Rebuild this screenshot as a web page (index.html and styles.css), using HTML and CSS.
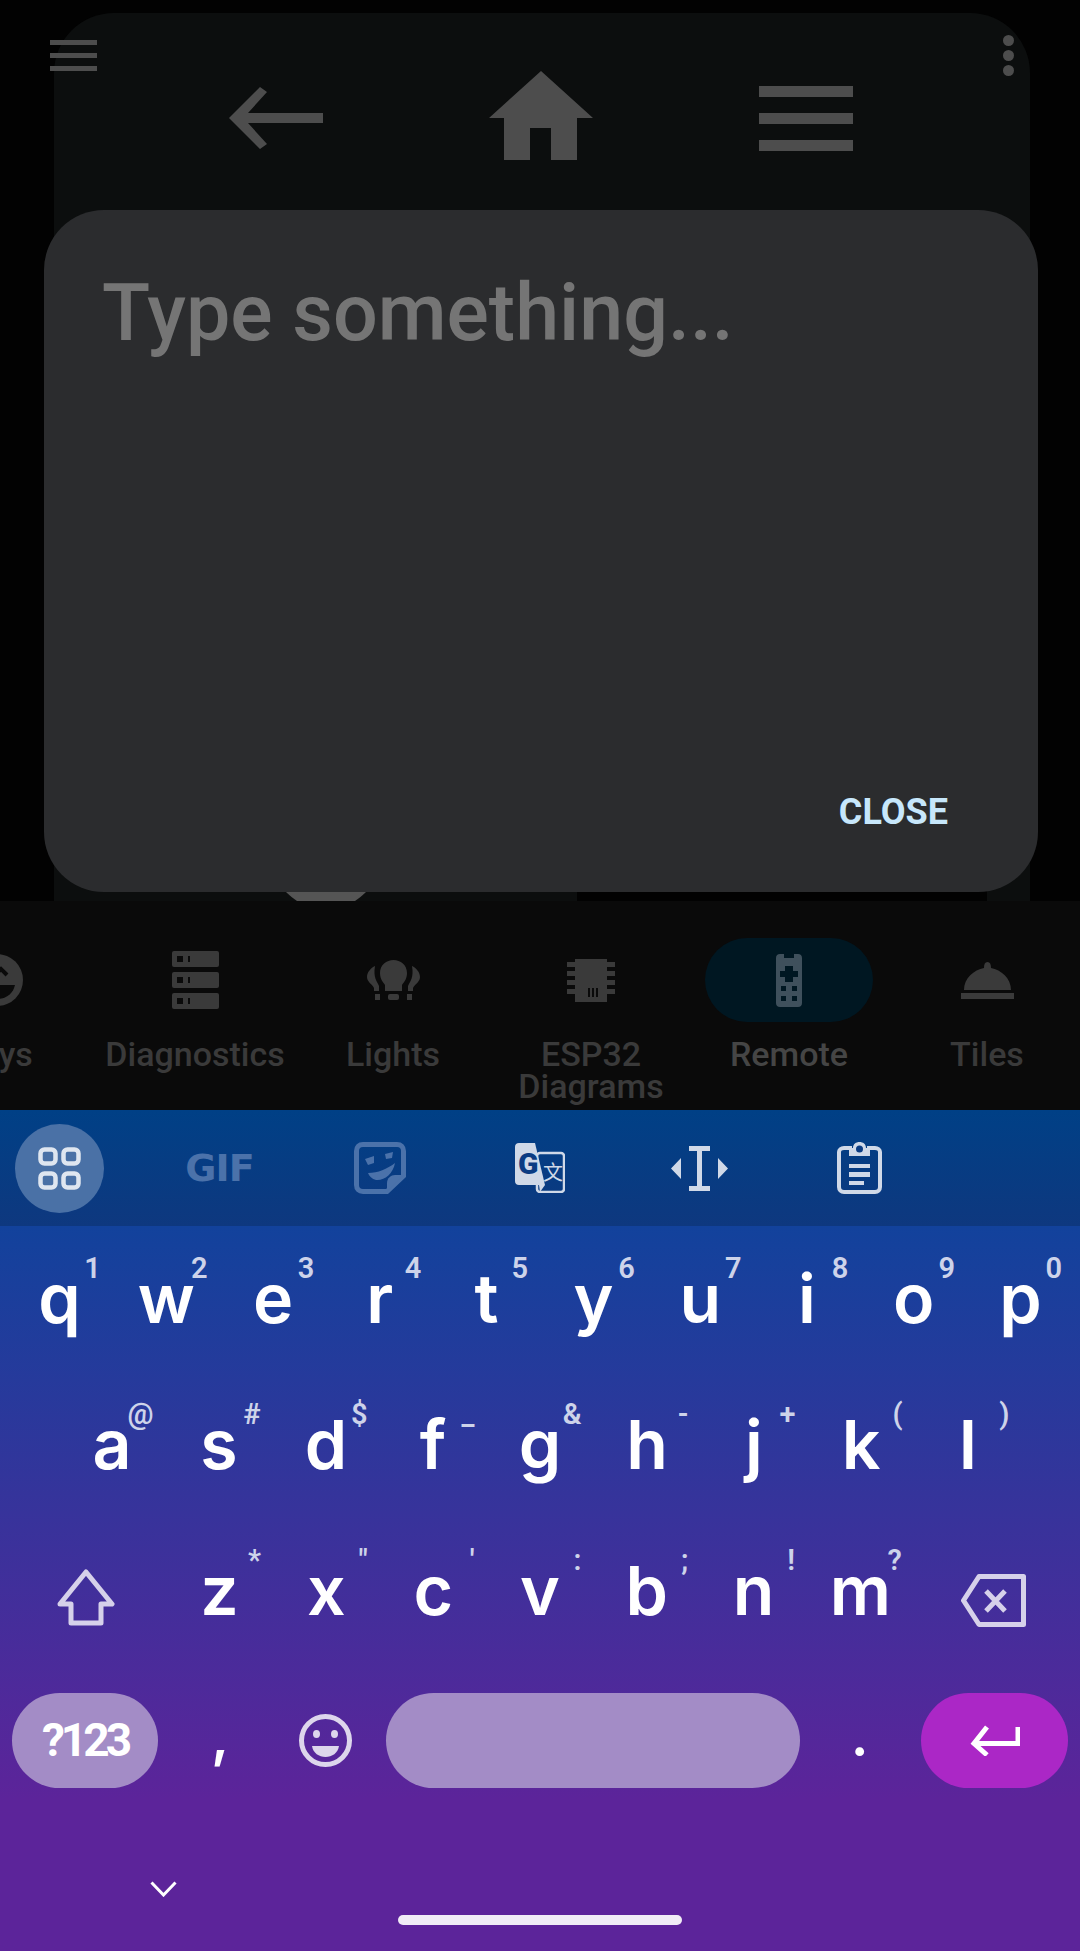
FILE: index.html
```html
<!DOCTYPE html>
<html>
<head>
    <title>Remote</title>
    <link rel="stylesheet" href="styles.css">
</head>
<body>

<div class="app">
    <div class="panel">
        <div class="panel-hole"></div>
    </div>

    <div class="topbar">
        <div class="bars bars-small"><i></i><i></i><i></i></div>
        <div class="dots"><i></i><i></i><i></i></div>
    </div>

    <div class="remote-row">
        <div class="remote-slot remote-slot-low">
            <svg width="94" height="62" viewBox="0 0 94 62"><polygon points="0,31 31,0 38,5 19,26 94,26 94,36 19,36 38,57 31,62" fill="#4d4d4d"/></svg>
        </div>
        <div class="remote-slot">
            <svg width="104" height="89" viewBox="0 0 104 89"><polygon points="52,0 104,47 88,47 88,89 62,89 62,57 41,57 41,89 15,89 15,47 0,47" fill="#4d4d4d"/></svg>
        </div>
        <div class="remote-slot remote-slot-low">
            <div class="bars bars-large"><i></i><i></i><i></i></div>
        </div>
    </div>

    <svg class="knob" width="80" height="9" viewBox="0 0 80 9"><path d="M0 0H80C76 4 72 7 69 9H11C8 7 4 4 0 0Z" fill="#555"/></svg>

    <div class="dialog">
        <div class="dialog-input">Type something...</div>
        <div class="dialog-close">CLOSE</div>
    </div>
</div>

<div class="nav">
    <div class="nav-item">
        <div class="nav-icon">
            <svg width="52" height="52" viewBox="0 0 52 52"><circle cx="26" cy="26" r="26" fill="#3a3a3a"/><path d="M24 21L30 15L36 21" fill="none" stroke="#0a0a0a" stroke-width="4"/><path d="M12 31H44C42 40 35 45 26 45C18 45 13 40 12 31Z" fill="#0a0a0a"/></svg>
        </div>
        <div class="nav-label">Toys</div>
    </div>
    <div class="nav-item">
        <div class="nav-icon">
            <svg width="47" height="58" viewBox="0 0 47 58">
                <rect y="0" width="47" height="16" rx="2" fill="#3a3a3a"/>
                <rect y="21" width="47" height="16" rx="2" fill="#3a3a3a"/>
                <rect y="42" width="47" height="16" rx="2" fill="#3a3a3a"/>
                <path d="M5 5h6v6H5zM16 5h2v6h-2zM5 26h6v6H5zM16 26h2v6h-2zM5 47h6v6H5zM16 47h2v6h-2z" fill="#0a0a0a"/>
            </svg>
        </div>
        <div class="nav-label">Diagnostics</div>
    </div>
    <div class="nav-item">
        <div class="nav-icon">
            <svg width="53" height="40" viewBox="0 0 53 40" fill="#3a3a3a">
                <path d="M26.5 0C33.5 0 40 5 40 13C40 19 37 22 35 25V31H18V25C16 22 13 19 13 13C13 5 19.500 0 26.500 0Z"/>
                <rect x="21" y="34" width="11" height="6" rx="2"/>
                <path d="M8 6C4 8 0 12 0 17C0 22 5 24 7 28V31H12V26C10 21 6 18 8 6Z"/>
                <path d="M45 6C49 8 53 12 53 17C53 22 48 24 46 28V31H41V26C43 21 47 18 45 6Z"/>
                <rect x="8" y="34" width="5" height="6"/>
                <rect x="40" y="34" width="5" height="6"/>
            </svg>
        </div>
        <div class="nav-label">Lights</div>
    </div>
    <div class="nav-item">
        <div class="nav-icon">
            <svg width="48" height="43" viewBox="0 0 48 43" fill="#3a3a3a">
                <rect x="8" y="0" width="32" height="43"/>
                <path d="M0 3h48v5H0zM0 12h48v5H0zM0 21h48v5H0zM0 30h48v5H0z"/>
                <path d="M21 29h2v9h-2zM25 29h2v9h-2zM29 29h2v9h-2z" fill="#0a0a0a"/>
            </svg>
        </div>
        <div class="nav-label">ESP32 Diagrams</div>
    </div>
    <div class="nav-item nav-item-active">
        <div class="nav-icon">
            <svg width="26" height="53" viewBox="0 0 26 53">
                <path d="M4 0H8V4H18V0H22C24.500 0 26 1.500 26 4V49C26 51.500 24.500 53 22 53H4C1.500 53 0 51.500 0 49V4C0 1.500 1.500 0 4 0Z" fill="#3f505c"/>
                <path d="M9 12h8v5h5v6h-5v5H9v-5H4v-6h5z" fill="#001722"/>
                <path d="M5 32h5v5H5zM16 32h5v5h-5zM5 42h5v5H5zM16 42h5v5h-5z" fill="#001722"/>
            </svg>
        </div>
        <div class="nav-label">Remote</div>
    </div>
    <div class="nav-item">
        <div class="nav-icon">
            <svg width="53" height="37" viewBox="0 0 53 37" fill="#3a3a3a">
                <path d="M3 28C3 16 13 8 23 6C23 2 24 0 26.500 0C29 0 30 2 30 6C40 8 50 16 50 28Z"/>
                <rect y="31" width="53" height="6"/>
            </svg>
        </div>
        <div class="nav-label">Tiles</div>
    </div>
</div>

<div class="keyboard">
    <div class="kb-toolbar">
        <div class="tool tool-active">
            <svg width="43" height="43" viewBox="0 0 43 43" fill="none" stroke="#dfe6f0" stroke-width="4.500">
                <rect x="2.500" y="2.500" width="15" height="14" rx="4"/><rect x="25.500" y="2.500" width="15" height="14" rx="4"/>
                <rect x="2.500" y="26.500" width="15" height="14" rx="4"/><rect x="25.500" y="26.500" width="15" height="14" rx="4"/>
            </svg>
        </div>
        <div class="tool tool-gif">GIF</div>
        <div class="tool">
            <svg width="52" height="52" viewBox="0 0 52 52">
                <path d="M9 2.500H43C47 2.500 49.500 5 49.500 9V34L33 49.500H9C5 49.500 2.500 47 2.500 43V9C2.500 5 5 2.500 9 2.500Z" fill="none" stroke="#4b72aa" stroke-width="5"/>
                <path d="M33 49.500V41C33 36 37 33 41 33H49.500Z" fill="#4b72aa"/>
                <path d="M11 17L20 14L20 21L14 23ZM31 12L39 10L38 16L32 17ZM14 31C24 31 33 27 41 21C39 32 30 39 22 38C18 37 15 34 14 31Z" fill="#4b72aa"/>
            </svg>
        </div>
        <div class="tool">
            <svg width="50" height="50" viewBox="0 0 50 50">
                <rect x="22" y="10" width="27" height="39" rx="3" fill="none" stroke="#d0d9e8" stroke-width="2.500"/>
                <path d="M4 0H20L30 42H4C1.500 42 0 40.500 0 38V4C0 1.500 1.500 0 4 0Z" fill="#d0d9e8"/>
                <path d="M24 42L30 42L25 49Z" fill="#d0d9e8"/>
                <text x="3" y="31" class="tr-g">G</text>
                <text x="28" y="37" class="tr-x">文</text>
            </svg>
        </div>
        <div class="tool">
            <svg width="57" height="45" viewBox="0 0 57 45" fill="#d0d9e8">
                <path d="M18 0H39V5H31V40H39V45H18V40H26V5H18Z"/>
                <path d="M10 12V33L0 22.500ZM47 12V33L57 22.500Z"/>
            </svg>
        </div>
        <div class="tool">
            <svg width="45" height="52" viewBox="0 0 45 52">
                <path d="M15 6H7C4 6 2 8 2 10V45C2 48 4 50 7 50H38C41 50 43 48 43 45V10C43 8 41 6 38 6H30" fill="none" stroke="#d0d9e8" stroke-width="4"/>
                <path d="M12 6H16C16 2 19 0 22.500 0C26 0 29 2 29 6H33V14H12Z" fill="#d0d9e8"/>
                <circle cx="22.500" cy="7" r="3.500" fill="#0b3c83"/>
                <path d="M12 22H33V26H12ZM12 30H33V35H12ZM12 39H27V43H12Z" fill="#d0d9e8"/>
            </svg>
        </div>
    </div>

    <div class="kb-keys">
        <div class="kb-row">
            <div class="key">q<span class="hint">1</span></div>
            <div class="key">w<span class="hint">2</span></div>
            <div class="key">e<span class="hint">3</span></div>
            <div class="key">r<span class="hint">4</span></div>
            <div class="key">t<span class="hint">5</span></div>
            <div class="key">y<span class="hint">6</span></div>
            <div class="key">u<span class="hint">7</span></div>
            <div class="key">i<span class="hint">8</span></div>
            <div class="key">o<span class="hint">9</span></div>
            <div class="key">p<span class="hint">0</span></div>
        </div>
        <div class="kb-row">
            <div class="key">a<span class="hint">@</span></div>
            <div class="key">s<span class="hint">#</span></div>
            <div class="key">d<span class="hint">$</span></div>
            <div class="key">f<span class="hint">_</span></div>
            <div class="key">g<span class="hint">&amp;</span></div>
            <div class="key">h<span class="hint">-</span></div>
            <div class="key">j<span class="hint">+</span></div>
            <div class="key">k<span class="hint">(</span></div>
            <div class="key">l<span class="hint">)</span></div>
        </div>
        <div class="kb-row">
            <div class="key key-wide key-icon">
                <svg width="58" height="57" viewBox="0 0 58 57"><path d="M29 3L55 35H44V54H14V35H3Z" fill="none" stroke="#d6d1ea" stroke-width="5" stroke-linejoin="round"/></svg>
            </div>
            <div class="key">z<span class="hint">*</span></div>
            <div class="key">x<span class="hint">"</span></div>
            <div class="key">c<span class="hint">'</span></div>
            <div class="key">v<span class="hint">:</span></div>
            <div class="key">b<span class="hint">;</span></div>
            <div class="key">n<span class="hint">!</span></div>
            <div class="key">m<span class="hint">?</span></div>
            <div class="key key-wide key-icon key-del">
                <svg width="65" height="53" viewBox="0 0 65 53" fill="none" stroke="#d6d1ea" stroke-width="5" stroke-linejoin="round"><path d="M18 2.500H62.500V50.500H18L2.500 26.500Z"/><path d="M25 17L44 37M44 17L25 37"/></svg>
            </div>
        </div>
        <div class="kb-row">
            <div class="key key-wide key-flat"><div class="pill pill-sym">?123</div></div>
            <div class="key key-punct">,</div>
            <div class="key key-flat">
                <svg class="emoji" width="53" height="53" viewBox="0 0 53 53">
                    <circle cx="26.500" cy="26.500" r="24" fill="none" stroke="#ddd6ec" stroke-width="5"/>
                    <ellipse cx="17.500" cy="20" rx="3.500" ry="4" fill="#ddd6ec"/><ellipse cx="35.500" cy="20" rx="3.500" ry="4" fill="#ddd6ec"/>
                    <path d="M13 32H40C39 39 33 43 26.500 43C20 43 14 39 13 32Z" fill="#ddd6ec"/>
                </svg>
            </div>
            <div class="key key-space key-flat"><div class="pill pill-space"></div></div>
            <div class="key key-punct">.</div>
            <div class="key key-wide key-flat">
                <div class="pill pill-enter">
                    <svg width="50" height="31" viewBox="0 0 50 31" fill="none" stroke="#fff" stroke-width="5"><path d="M48 2V18.500H5"/><path d="M17 2L4 18.500L17 30"/></svg>
                </div>
            </div>
        </div>
    </div>

    <div class="kb-bottom">
        <svg class="kb-hide" width="27" height="16" viewBox="0 0 27 16"><path d="M1.500 1.500L13.500 14L25.500 1.500" fill="none" stroke="#fff" stroke-width="3"/></svg>
        <div class="home-pill"></div>
    </div>
</div>

</body>
</html>
```

FILE: styles.css
```css
* {
  box-sizing: border-box;
}

body {
  margin: 0;
  width: 1080px;
  height: 1951px;
  overflow: hidden;
  background-color: #020202;
  font-family: Roboto, sans-serif;
}

/* dimmed app behind the dialog */
.app {
  position: relative;
  height: 901px;
  overflow: hidden;
}

.panel {
  position: absolute;
  left: 54px;
  top: 13px;
  width: 976px;
  height: 900px;
  border-radius: 60px 60px 0 0;
  background-color: #0c0e0e;
}

.panel-hole {
  position: absolute;
  left: 523px;
  top: 870px;
  width: 410px;
  height: 30px;
  background-color: #020202;
}

.topbar {
  position: relative;
  display: flex;
  justify-content: space-between;
  align-items: center;
  padding: 35px 66px 0 50px;
}

.bars {
  display: flex;
  flex-direction: column;
}

.bars i {
  display: block;
  background-color: #4d4d4d;
}

.bars-small {
  gap: 8px;
}

.bars-small i {
  width: 47px;
  height: 5px;
}

.bars-large {
  gap: 16px;
}

.bars-large i {
  width: 94px;
  height: 11px;
}

.dots {
  display: flex;
  flex-direction: column;
  gap: 4px;
}

.dots i {
  display: block;
  width: 11px;
  height: 11px;
  border-radius: 50%;
  background-color: #4d4d4d;
}

.remote-row {
  position: relative;
  display: flex;
  justify-content: center;
  padding-left: 2px;
  margin-top: -5px;
}

.remote-slot {
  width: 265px;
  height: 89px;
  display: flex;
  justify-content: center;
  align-items: center;
}

.remote-slot-low {
  padding-top: 5px;
}

.knob {
  position: absolute;
  left: 286px;
  top: 892px;
}

.dialog {
  position: absolute;
  left: 44px;
  top: 210px;
  width: 994px;
  height: 682px;
  padding: 59px 90px 58px 58px;
  border-radius: 60px;
  background-color: #2b2c2e;
  display: flex;
  flex-direction: column;
  justify-content: space-between;
}

.dialog-input {
  font-size: 79px;
  font-weight: 500;
  line-height: 88px;
  color: #757575;
}

.dialog-close {
  align-self: flex-end;
  font-size: 36px;
  font-weight: 700;
  line-height: 44px;
  color: #c7e7fb;
}

/* bottom navigation */
.nav {
  height: 209px;
  background-color: #0a0a0a;
  display: flex;
  margin-left: -102px;
  width: 1284px;
  padding-top: 37px;
}

.nav-item {
  width: 198px;
  display: flex;
  flex-direction: column;
  align-items: center;
}

.nav-icon {
  width: 168px;
  height: 84px;
  border-radius: 42px;
  display: flex;
  justify-content: center;
  align-items: center;
}

.nav-item-active .nav-icon {
  background-color: #001722;
}

.nav-label {
  margin-top: 16px;
  font-size: 34px;
  line-height: 32px;
  font-weight: 500;
  color: #3a3a3a;
  text-align: center;
  width: 180px;
}

.nav-item-active .nav-label {
  color: #454545;
}

/* keyboard */
.keyboard {
  height: 841px;
  position: relative;
}

.kb-toolbar {
  height: 116px;
  background: linear-gradient(#004086, #0e387f);
  display: flex;
  align-items: center;
  gap: 71px;
  padding-left: 15px;
}

.tool {
  width: 89px;
  height: 89px;
  display: flex;
  justify-content: center;
  align-items: center;
}

.tool-active {
  border-radius: 50%;
  background-color: #4a71a6;
}

.tool-gif {
  font-family: "DejaVu Sans", sans-serif;
  font-size: 38px;
  font-weight: 700;
  color: #4b72aa;
  letter-spacing: -1px;
}

.tr-g {
  font-family: Roboto, sans-serif;
  font-size: 30px;
  font-weight: 900;
  fill: #0b3c83;
}

.tr-x {
  font-family: "Noto Sans CJK SC", sans-serif;
  font-size: 20px;
  fill: #d0d9e8;
}

.kb-keys {
  height: 725px;
  padding: 3px 6px 0;
  background: linear-gradient(#12429c 0, #5c249a 79%);
}

.kb-row {
  height: 146px;
  display: flex;
  justify-content: center;
}

.key {
  position: relative;
  width: 107px;
  height: 146px;
  padding-bottom: 8px;
  display: flex;
  justify-content: center;
  align-items: center;
  font-family: Inter, sans-serif;
  font-size: 68px;
  font-weight: 600;
  line-height: 1;
  color: #fff;
}

.key-wide {
  width: 160.5px;
}

.key-space {
  width: 425.500px;
}

.key-flat {
  padding-bottom: 0;
}

.key-icon {
  padding: 7px 0 0;
}

.key-del {
  padding-top: 12px;
}

.key-punct {
  font-size: 56px;
  padding-bottom: 8px;
}

.emoji {
  margin-right: 4px;
}

.hint {
  position: absolute;
  top: 25px;
  right: 12px;
  font-family: Roboto, sans-serif;
  font-size: 29px;
  font-weight: 600;
  line-height: 1;
  color: #cdd3ea;
}

.pill {
  height: 95px;
  width: 100%;
  margin: 0 6px;
  border-radius: 48px;
  display: flex;
  justify-content: center;
  align-items: center;
}

.pill-sym {
  margin-right: 9px;
  background-color: #a38cc6;
  font-family: Roboto, sans-serif;
  font-size: 46px;
  font-weight: 700;
  letter-spacing: -4px;
}

.pill-space {
  margin-left: 5px;
  background-color: #a38cc6;
}

.pill-enter {
  margin-left: 8px;
  background-color: #ab27c6;
}

.kb-hide {
  position: absolute;
  left: 150px;
  top: 771px;
}

.kb-bottom .home-pill {
  position: absolute;
  left: 398px;
  top: 805px;
  width: 284px;
  height: 10px;
  border-radius: 5px;
  background-color: #f0ecf6;
}
```
